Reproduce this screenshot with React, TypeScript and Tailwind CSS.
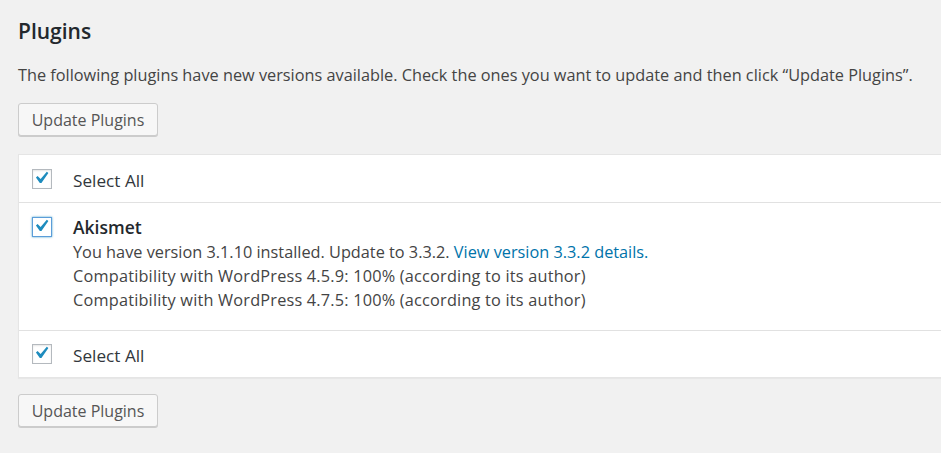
import React from "react";

const font = { fontFamily: '"Open Sans", "Liberation Sans", sans-serif' };

const Check = ({ focused = false }: { focused?: boolean }) => (
  <div
    className={`relative w-[20px] h-[20px] shrink-0 bg-white border ${
      focused
        ? "border-[#5b9dd9] shadow-[0_0_2px_rgba(30,140,190,0.8)]"
        : "border-[#b4b9be] shadow-[inset_0_1px_2px_rgba(0,0,0,0.1)]"
    }`}
  >
    <svg viewBox="0 0 20 20" className="absolute -top-[4px] -left-[4px] w-[24px] h-[24px]">
      <path d="M14.83 4.89l1.34.94-5.81 8.38H9.02L5.78 9.67l1.34-1.25 2.57 2.4z" fill="#1e8cbe" />
    </svg>
  </div>
);

const UpdateButton = () => (
  <button className="h-[33px] w-[140px] bg-[#f7f7f7] border border-[#cccccc] rounded-[3px] shadow-[0_1px_0_#cccccc] text-[#555555] text-[16px] leading-[20px]">
    Update Plugins
  </button>
);

const SelectAllRow = ({ top }: { top?: boolean }) => (
  <div className={`flex items-center h-[47px] pl-[13px] ${top ? "" : "border-t border-[#e1e1e1]"}`}>
    <Check />
    <span className="ml-[21px] text-[17.2px] leading-[24px] text-[#32373c] translate-y-[2px]">Select All</span>
  </div>
);

export default function App() {
  return (
    <div style={font} className="w-[941px] h-[453px] overflow-hidden bg-[#f1f1f1] pl-[18px] pt-[17px] text-[#444444]">
      <h2 className="text-[21px] leading-[28px] font-semibold text-[#23282d]">Plugins</h2>
      <p className="mt-[18px] text-[16.3px] leading-[24px] whitespace-nowrap">
        The following plugins have new versions available. Check the ones you want to update and then click “Update Plugins”.
      </p>
      <div className="mt-[16px]">
        <UpdateButton />
      </div>
      <div className="mt-[18px] w-[940px] bg-white border border-[#e5e5e5] shadow-[0_1px_1px_rgba(0,0,0,0.04)]">
        <SelectAllRow top />
        <div className="flex border-t border-[#e1e1e1] pl-[13px] pt-[11px] pb-[18px]">
          <div className="mt-[3px]">
            <Check focused />
          </div>
          <div className="ml-[21px]">
            <div className="text-[17.5px] leading-[26px] font-semibold text-[#23282d]">Akismet</div>
            <div className="text-[16.3px] leading-[24px]">
              You have version 3.1.10 installed. Update to 3.3.2.{" "}
              <a className="text-[#0073aa]">View version 3.3.2 details.</a>
            </div>
            <div className="text-[16.3px] leading-[24px] tracking-[0.2px]">Compatibility with WordPress 4.5.9: 100% (according to its author)</div>
            <div className="text-[16.3px] leading-[24px] tracking-[0.2px]">Compatibility with WordPress 4.7.5: 100% (according to its author)</div>
          </div>
        </div>
        <SelectAllRow />
      </div>
      <div className="mt-[16px]">
        <UpdateButton />
      </div>
    </div>
  );
}
